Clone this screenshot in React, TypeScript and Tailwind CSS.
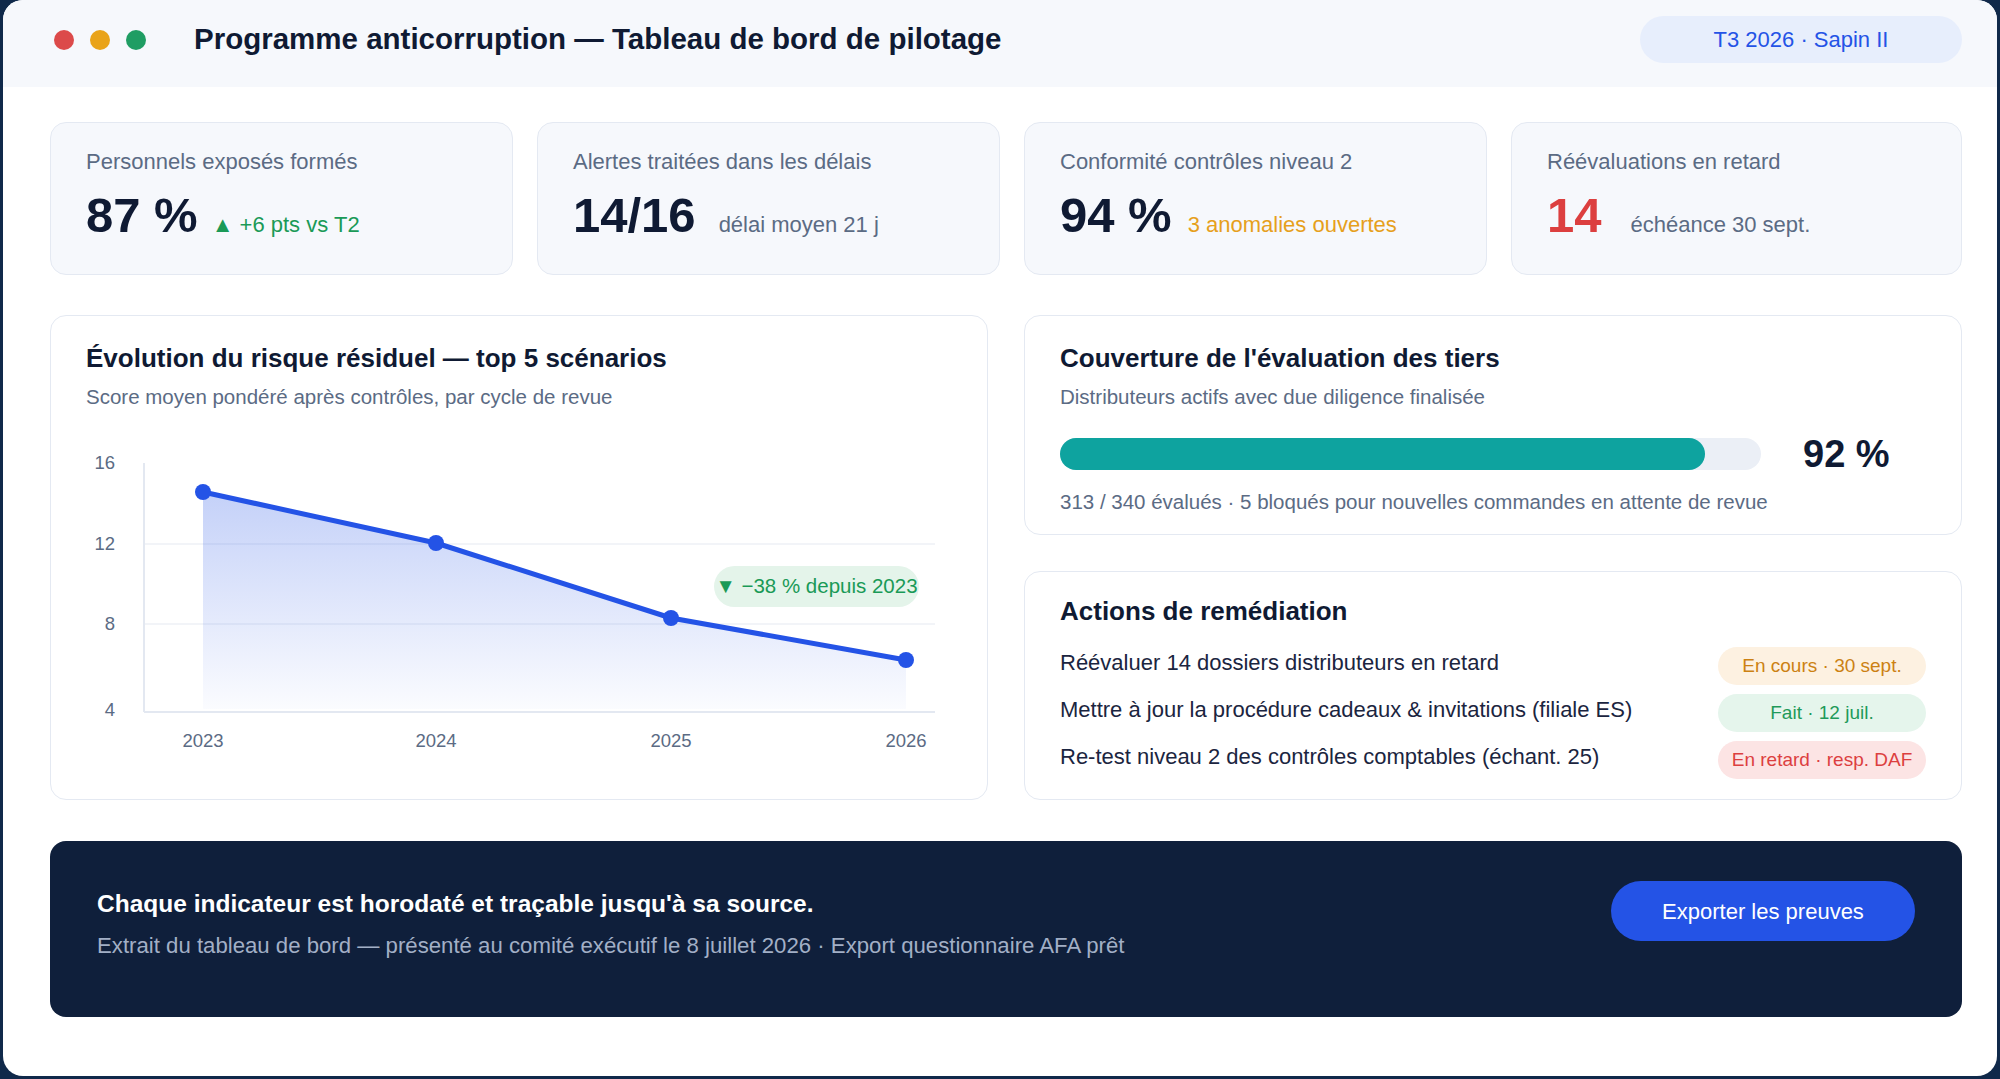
import React from 'react';

type Kpi = {
  label: string;
  value: string;
  sub: string;
  valueClass: string;
  subClass: string;
  width: string;
};

const kpis: Kpi[] = [
  {
    label: 'Personnels exposés formés',
    value: '87 %',
    sub: '▲ +6 pts vs T2',
    valueClass: 'text-[#0f1a33]',
    subClass: 'ml-[14px] text-[#1a9a57]',
    width: 'w-[463px]',
  },
  {
    label: 'Alertes traitées dans les délais',
    value: '14/16',
    sub: 'délai moyen 21 j',
    valueClass: 'text-[#0f1a33]',
    subClass: 'ml-[23px] text-[#5b6b84]',
    width: 'w-[463px]',
  },
  {
    label: 'Conformité contrôles niveau 2',
    value: '94 %',
    sub: '3 anomalies ouvertes',
    valueClass: 'text-[#0f1a33]',
    subClass: 'ml-[16px] text-[#e6a01c]',
    width: 'w-[463px]',
  },
  {
    label: 'Réévaluations en retard',
    value: '14',
    sub: 'échéance 30 sept.',
    valueClass: 'text-[#dc3f3f]',
    subClass: 'ml-[29px] text-[#5b6b84]',
    width: 'flex-1',
  },
];

const actions = [
  { text: 'Réévaluer 14 dossiers distributeurs en retard', status: 'En cours · 30 sept.', pill: 'bg-[#fdf1e1] text-[#cc8113]' },
  { text: 'Mettre à jour la procédure cadeaux & invitations (filiale ES)', status: 'Fait · 12 juil.', pill: 'bg-[#e5f5ec] text-[#1f9a5a]' },
  { text: 'Re-test niveau 2 des contrôles comptables (échant. 25)', status: 'En retard · resp. DAF', pill: 'bg-[#fce4e4] text-[#dc3f3f]' },
];

const points = [
  { year: '2023', x: 117, y: 51 },
  { year: '2024', x: 350, y: 102 },
  { year: '2025', x: 585, y: 177 },
  { year: '2026', x: 820, y: 219 },
];

function KpiCard({ kpi }: { kpi: Kpi }) {
  return (
    <div className={`${kpi.width} h-[153px] rounded-[16px] border-[1.5px] border-[#e4e9f2] bg-[#f6f8fc] px-[35px] pt-[26px]`}>
      <p className="text-[22px] leading-[26px] text-[#5b6b84]">{kpi.label}</p>
      <div className="mt-[13px] flex items-baseline">
        <span className={`text-[49px] font-bold leading-[54px] ${kpi.valueClass}`}>{kpi.value}</span>
        <span className={`text-[22px] ${kpi.subClass}`}>{kpi.sub}</span>
      </div>
    </div>
  );
}

function RiskChart() {
  const line = points.map((p) => `${p.x},${p.y}`).join(' ');
  const area = `${line} 820,268 117,268`;
  return (
    <div className="relative mt-[32px] h-[320px]">
      <svg width="866" height="320" className="block">
        <defs>
          <linearGradient id="riskFill" gradientUnits="userSpaceOnUse" x1="0" y1="51" x2="0" y2="268">
            <stop offset="0" stopColor="#2453e6" stopOpacity="0.27" />
            <stop offset="1" stopColor="#2453e6" stopOpacity="0.02" />
          </linearGradient>
        </defs>
        <g fontFamily="'Liberation Sans', Arial, sans-serif" fontSize="18.5" fill="#5b6b84">
          <text x="29" y="23" textAnchor="end" dominantBaseline="middle">16</text>
          <text x="29" y="104" textAnchor="end" dominantBaseline="middle">12</text>
          <text x="29" y="184" textAnchor="end" dominantBaseline="middle">8</text>
          <text x="29" y="270" textAnchor="end" dominantBaseline="middle">4</text>
        </g>
        <line x1="58" y1="103" x2="849" y2="103" stroke="#eef1f6" strokeWidth="1.5" />
        <line x1="58" y1="183" x2="849" y2="183" stroke="#eef1f6" strokeWidth="1.5" />
        <line x1="58" y1="22" x2="58" y2="271" stroke="#e3e8f1" strokeWidth="2" />
        <line x1="58" y1="271" x2="849" y2="271" stroke="#e3e8f1" strokeWidth="2" />
        <polygon points={area} fill="url(#riskFill)" />
        <polyline points={line} fill="none" stroke="#2453e6" strokeWidth="5" strokeLinejoin="round" strokeLinecap="round" />
        {points.map((p) => (
          <circle key={p.year} cx={p.x} cy={p.y} r="8" fill="#2453e6" />
        ))}
        <g fontFamily="'Liberation Sans', Arial, sans-serif" fontSize="18.5" fill="#5b6b84">
          {points.map((p) => (
            <text key={p.year} x={p.x} y="301" textAnchor="middle" dominantBaseline="middle">
              {p.year}
            </text>
          ))}
        </g>
      </svg>
      <div className="absolute left-[628px] top-[125px] flex h-[41px] w-[205px] items-center justify-center whitespace-nowrap rounded-full bg-[#e4f4ea] text-[20.5px] text-[#1a9a57]">
        ▼ −38 % depuis 2023
      </div>
    </div>
  );
}

export default function App() {
  return (
    <div className="h-[1079px] overflow-hidden bg-[#10294a] px-[3px] font-['Liberation_Sans',Arial,sans-serif]">
      <div className="flex h-[1076px] flex-col overflow-hidden rounded-[20px] bg-white">
        <header className="flex h-[87px] shrink-0 items-center bg-[#f6f8fc] pb-[8px] pl-[51px] pr-[35px]">
          <div className="flex gap-4">
            <span className="h-5 w-5 rounded-full bg-[#dc4a4a]" />
            <span className="h-5 w-5 rounded-full bg-[#e9a319]" />
            <span className="h-5 w-5 rounded-full bg-[#1f9d63]" />
          </div>
          <h1 className="ml-[48px] text-[29.5px] font-bold text-[#0f1a33]">
            Programme anticorruption — Tableau de bord de pilotage
          </h1>
          <div className="ml-auto flex h-[47px] w-[322px] items-center justify-center rounded-full bg-[#e7eefc] text-[22px] text-[#2453e6]">
            T3 2026 · Sapin II
          </div>
        </header>

        <main className="flex flex-col pl-[47px] pr-[35px] pt-[35px]">
          <div className="flex gap-[24px]">
            {kpis.map((k) => (
              <KpiCard key={k.label} kpi={k} />
            ))}
          </div>

          <div className="mt-[40px] grid h-[485px] grid-cols-2 gap-[36px]">
            <section className="rounded-[16px] border-[1.5px] border-[#e4e9f2] bg-white px-[35px] pt-[27px]">
              <h2 className="text-[26px] font-bold leading-[31px] text-[#0f1a33]">
                Évolution du risque résiduel — top 5 scénarios
              </h2>
              <p className="mt-[10px] text-[20.5px] leading-[25px] text-[#5b6b84]">
                Score moyen pondéré après contrôles, par cycle de revue
              </p>
              <RiskChart />
            </section>

            <div className="flex flex-col gap-[36px]">
              <section className="rounded-[16px] border-[1.5px] border-[#e4e9f2] bg-white px-[35px] pb-[20px] pt-[27px]">
                <h2 className="text-[26px] font-bold leading-[31px] text-[#0f1a33]">
                  Couverture de l'évaluation des tiers
                </h2>
                <p className="mt-[10px] text-[20.5px] leading-[25px] text-[#5b6b84]">
                  Distributeurs actifs avec due diligence finalisée
                </p>
                <div className="mt-[22px] flex h-[46px] items-center">
                  <div className="h-[32px] flex-1 rounded-full bg-[#ebeff6]">
                    <div className="h-full w-[92%] rounded-full bg-[#0ea39f]" />
                  </div>
                  <span className="ml-[42px] w-[123px] text-[38px] font-bold text-[#0f1a33]">92 %</span>
                </div>
                <p className="mt-[12px] text-[20.5px] leading-[25px] text-[#5b6b84]">
                  313 / 340 évalués · 5 bloqués pour nouvelles commandes en attente de revue
                </p>
              </section>

              <section className="flex-1 rounded-[16px] border-[1.5px] border-[#e4e9f2] bg-white px-[35px] pt-[24px]">
                <h2 className="text-[26px] font-bold leading-[31px] text-[#0f1a33]">Actions de remédiation</h2>
                <ul className="mt-[20px] flex flex-col gap-[9px]">
                  {actions.map((a) => (
                    <li key={a.text} className="flex h-[38px] items-start justify-between">
                      <span className="text-[22px] leading-[31px] text-[#1b2540]">{a.text}</span>
                      <span className={`flex h-[38px] w-[208px] items-center justify-center rounded-full text-[19px] ${a.pill}`}>
                        {a.status}
                      </span>
                    </li>
                  ))}
                </ul>
              </section>
            </div>
          </div>

          <div className="mt-[41px] flex h-[176px] items-start justify-between rounded-[16px] bg-[#0f1f3b] px-[47px] pt-[40px]">
            <div className="mt-[8px]">
              <p className="text-[24.5px] font-bold leading-[29px] text-white">
                Chaque indicateur est horodaté et traçable jusqu'à sa source.
              </p>
              <p className="mt-[15px] text-[22.2px] leading-[26px] text-[#a2afc6]">
                Extrait du tableau de bord — présenté au comité exécutif le 8 juillet 2026 · Export questionnaire AFA prêt
              </p>
            </div>
            <button className="flex h-[60px] w-[304px] items-center justify-center rounded-full bg-[#2453e6] text-[22px] text-white">
              Exporter les preuves
            </button>
          </div>
        </main>
      </div>
    </div>
  );
}
